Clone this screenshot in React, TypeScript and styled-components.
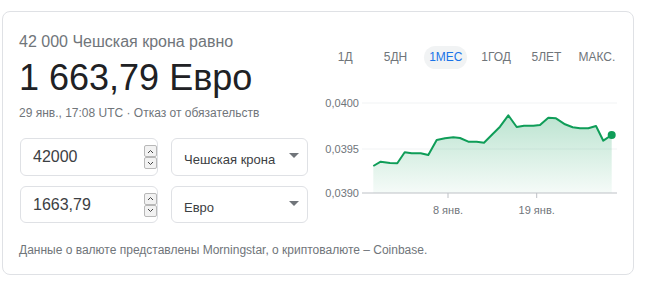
import { FunctionComponent } from "react";
import styled, { createGlobalStyle } from "styled-components";

const GlobalStyle = createGlobalStyle`
  body {
    margin: 0;
    background: #ffffff;
    font-family: "Liberation Sans", Arial, sans-serif;
  }
`;

const Card = styled.div`
  margin: 11px 0 0 2px;
  width: 632px;
  height: 264px;
  box-sizing: border-box;
  border: 1px solid #dfe1e5;
  border-radius: 8px;
  padding: 20px 0 0 16px;
  display: flex;
  flex-direction: column;
`;
const Top = styled.div`
  display: flex;
  flex-direction: row;
`;
const LeftCol = styled.div`
  width: 301px;
  display: flex;
  flex-direction: column;
`;
const RightCol = styled.div`
  width: 302px;
  display: flex;
  flex-direction: column;
`;
const Caption = styled.div`
  font-size: 16px;
  line-height: 20px;
  color: #70757a;
`;
const Amount = styled.div`
  margin-top: 4px;
  font-size: 36px;
  line-height: 44px;
  color: #202124;
`;
const Meta = styled.div`
  margin-top: 5px;
  font-size: 12px;
  line-height: 16px;
  color: #70757a;
`;
const Rows = styled.div`
  margin: 17px 0 0 1px;
  display: flex;
  flex-direction: column;
  gap: 10px;
`;
const Row = styled.div<{ $h: number }>`
  display: flex;
  flex-direction: row;
  gap: 13px;
  height: ${(p) => p.$h}px;
`;
const NumberBox = styled.div`
  width: 138px;
  box-sizing: border-box;
  border: 1px solid #dfe1e5;
  border-radius: 6px;
  display: flex;
  align-items: center;
  justify-content: space-between;
  padding: 0 0 0 12px;
  font-size: 16px;
  color: #3c4043;
`;
const Spinner = styled.div`
  display: flex;
  flex-direction: column;
  margin-right: 0px;
`;
const SpinBtn = styled.div`
  width: 13px;
  height: 12px;
  box-sizing: border-box;
  border: 1px solid #b8b8b8;
  border-radius: 2px;
  background: #f2f2f2;
  display: flex;
  align-items: center;
  justify-content: center;
`;
const SelectBox = styled.div`
  width: 137px;
  box-sizing: border-box;
  border: 1px solid #dfe1e5;
  border-radius: 6px;
  display: flex;
  align-items: center;
  justify-content: space-between;
  padding: 5px 8px 0 12px;
  font-size: 13px;
  color: #3c4043;
`;
const Caret = styled.div`
  width: 0;
  height: 0;
  margin-bottom: 8px;
  border-left: 5px solid transparent;
  border-right: 5px solid transparent;
  border-top: 5px solid #70757a;
`;
const Tabs = styled.div`
  margin-top: 14px;
  display: grid;
  grid-template-columns: repeat(6, 1fr);
  height: 23px;
`;
const Tab = styled.div<{ $active?: boolean }>`
  justify-self: center;
  align-self: center;
  font-size: 12px;
  line-height: 23px;
  padding: 0 ${(p) => (p.$active ? 5 : 0)}px;
  border-radius: 12px;
  color: ${(p) => (p.$active ? "#1a73e8" : "#70757a")};
  background: ${(p) => (p.$active ? "#f1f3f4" : "transparent")};
`;
const Chart = styled.svg`
  margin-top: 21px;
  display: block;
`;
const Footer = styled.div`
  margin-top: auto;
  margin-bottom: 16px;
  font-size: 12px;
  line-height: 16px;
  color: #70757a;
`;

const points: [number, number][] = [
  [53.3, 76], [60.7, 71.7], [70, 73], [77.3, 73.3], [84.7, 62.3], [91.7, 63.3],
  [100.7, 63.3], [108.3, 65], [116.7, 50], [125, 48.3], [133.3, 47.3], [140, 48],
  [148.3, 51.7], [156.7, 51.7], [164, 52.7], [172.7, 44], [180, 36.7], [188.3, 25.3],
  [196.7, 37], [204, 35.7], [213.3, 35.7], [220, 35], [228.3, 27.7], [236, 28.3],
  [245, 34.3], [252.7, 37.3], [260, 38.3], [268.3, 38.3], [276, 36], [283.3, 50.7],
  [291.7, 45],
];

const Chevron: FunctionComponent<{ up?: boolean }> = ({ up }) => (
  <svg width="7" height="5" viewBox="0 0 7 5">
    <polyline
      points={up ? "1,4 3.5,1.5 6,4" : "1,1 3.5,3.5 6,1"}
      fill="none"
      stroke="#444"
      strokeWidth="1"
    />
  </svg>
);

const PriceChart: FunctionComponent = () => {
  const line = points.map((p) => p.join(",")).join(" ");
  const last = points[points.length - 1];
  const area = `M${points[0][0]},103 L${line.replace(/ /g, " L")} L${last[0]},103 Z`;
  return (
    <Chart width="302" height="130" viewBox="0 0 302 130">
      <defs>
        <linearGradient id="fill" x1="0" y1="0" x2="0" y2="1">
          <stop offset="0%" stopColor="#0f9d58" stopOpacity="0.28" />
          <stop offset="100%" stopColor="#0f9d58" stopOpacity="0.04" />
        </linearGradient>
      </defs>
      <line x1="42" x2="297" y1="13" y2="13" stroke="#f1f3f4" />
      <line x1="42" x2="297" y1="59" y2="59" stroke="#f1f3f4" />
      <path d={area} fill="url(#fill)" />
      <line x1="42" x2="297" y1="103" y2="103" stroke="#bdc1c6" />
      <line x1="128" x2="128" y1="103" y2="108" stroke="#bdc1c6" />
      <line x1="216.7" x2="216.7" y1="103" y2="108" stroke="#bdc1c6" />
      <polyline points={line} fill="none" stroke="#0f9d58" strokeWidth="2" strokeLinejoin="round" />
      <circle cx={last[0]} cy={last[1]} r="4" fill="#0f9d58" />
      <g fontFamily="Liberation Sans, Arial, sans-serif" fontSize="11" fill="#70757a">
        <text x="39" y="17" textAnchor="end">0,0400</text>
        <text x="39" y="63" textAnchor="end">0,0395</text>
        <text x="39" y="107" textAnchor="end">0,0390</text>
        <text x="128" y="124" textAnchor="middle">8 янв.</text>
        <text x="216.7" y="124" textAnchor="middle">19 янв.</text>
      </g>
    </Chart>
  );
};

const ConverterRow: FunctionComponent<{ value: string; currency: string; h: number }> = ({
  value,
  currency,
  h,
}) => (
  <Row $h={h}>
    <NumberBox>
      {value}
      <Spinner>
        <SpinBtn>
          <Chevron up />
        </SpinBtn>
        <SpinBtn>
          <Chevron />
        </SpinBtn>
      </Spinner>
    </NumberBox>
    <SelectBox>
      {currency}
      <Caret />
    </SelectBox>
  </Row>
);

const App: FunctionComponent = () => {
  const tabs = ["1Д", "5ДН", "1МЕС", "1ГОД", "5ЛЕТ", "МАКС."];
  return (
    <>
      <GlobalStyle />
      <Card>
        <Top>
          <LeftCol>
            <Caption>42 000 Чешская крона равно</Caption>
            <Amount>1 663,79 Евро</Amount>
            <Meta>29 янв., 17:08 UTC · Отказ от обязательств</Meta>
            <Rows>
              <ConverterRow value="42000" currency="Чешская крона" h={38} />
              <ConverterRow value="1663,79" currency="Евро" h={37} />
            </Rows>
          </LeftCol>
          <RightCol>
            <Tabs>
              {tabs.map((t) => (
                <Tab key={t} $active={t === "1МЕС"}>
                  {t}
                </Tab>
              ))}
            </Tabs>
            <PriceChart />
          </RightCol>
        </Top>
        <Footer>Данные о валюте представлены Morningstar, о криптовалюте – Coinbase.</Footer>
      </Card>
    </>
  );
};

export default App;
